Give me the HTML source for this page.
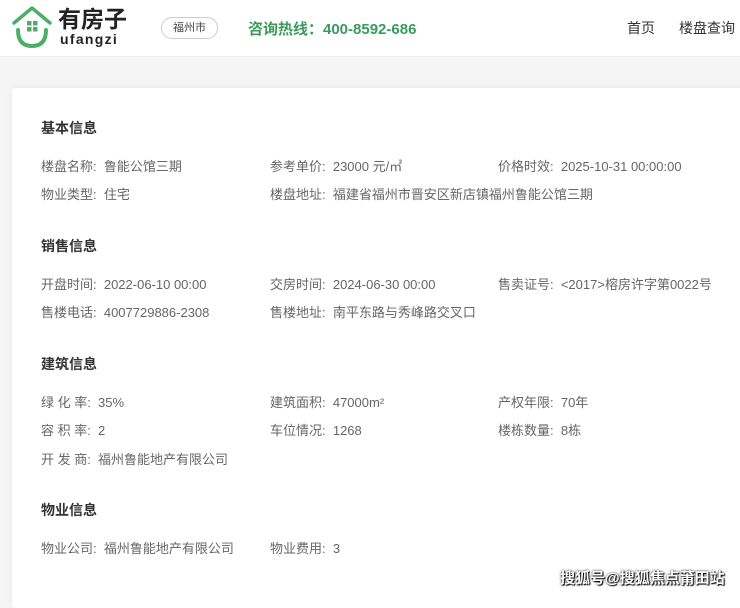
<!DOCTYPE html>
<html><head><meta charset="utf-8"><style>
*{margin:0;padding:0;box-sizing:border-box}
body{width:740px;height:594px;overflow:hidden;background:#f5f5f5;font-family:"Liberation Sans","Noto Sans CJK SC",sans-serif;position:relative}
.hdr{position:absolute;left:0;top:0;width:740px;height:57px;background:#fff;border-bottom:1px solid #eee}
.card{position:absolute;left:12px;top:88px;width:740px;height:520px;background:#fff;box-shadow:0 0 8px rgba(0,0,0,.06);border-radius:3px}
.t{position:absolute;white-space:nowrap}
.h{font-size:14px;font-weight:bold;color:#333;left:41px}
.r{font-size:13px;color:#666}
</style></head><body>
<div class="hdr">
<svg style="position:absolute;left:0;top:0" width="56" height="56" viewBox="0 0 56 56">
<path d="M14 23 L32 8 L50 23" fill="none" stroke="#4caf68" stroke-width="3.5" stroke-linecap="round" stroke-linejoin="round"/>
<path d="M18 30 Q18 46 32 46 Q46 46 46 30" fill="none" stroke="#4caf68" stroke-width="4" stroke-linecap="round"/>
<rect x="27" y="21" width="4.5" height="4.5" fill="#4caf68"/><rect x="33" y="21" width="4.5" height="4.5" fill="#4caf68"/>
<rect x="27" y="27" width="4.5" height="4.5" fill="#4caf68"/><rect x="33" y="27" width="4.5" height="4.5" fill="#4caf68"/>
</svg>
<div class="t" style="left:58px;top:4px;font-size:23px;line-height:30px;font-weight:bold;color:#222">有房子</div>
<div class="t" style="left:60px;top:31px;font-size:14px;line-height:16px;font-weight:bold;color:#222;letter-spacing:1.3px">ufangzi</div>
<div class="t" style="left:161px;top:17px;width:57px;height:22px;border:1px solid #ccc;border-radius:11px;font-size:11px;color:#444;text-align:center;line-height:20px">福州市</div>
<div class="t" style="left:248px;top:18px;font-size:15px;font-weight:bold;color:#3a9a5c">咨询热线：400-8592-686</div>
<div class="t" style="left:627px;top:18px;font-size:14px;color:#333">首页</div>
<div class="t" style="left:679px;top:18px;font-size:14px;color:#333">楼盘查询</div>
</div>
<div class="card"></div>

<div class="t h" style="top:118px">基本信息</div>
<div class="t r" style="left:41px;top:156px">楼盘名称:&nbsp; 鲁能公馆三期</div>
<div class="t r" style="left:270px;top:156px">参考单价:&nbsp; 23000 元/㎡</div>
<div class="t r" style="left:498px;top:156px">价格时效:&nbsp; 2025-10-31 00:00:00</div>
<div class="t r" style="left:41px;top:184px">物业类型:&nbsp; 住宅</div>
<div class="t r" style="left:270px;top:184px">楼盘地址:&nbsp; 福建省福州市晋安区新店镇福州鲁能公馆三期</div>

<div class="t h" style="top:236px">销售信息</div>
<div class="t r" style="left:41px;top:274px">开盘时间:&nbsp; 2022-06-10 00:00</div>
<div class="t r" style="left:270px;top:274px">交房时间:&nbsp; 2024-06-30 00:00</div>
<div class="t r" style="left:498px;top:274px">售卖证号:&nbsp; &lt;2017&gt;榕房许字第0022号</div>
<div class="t r" style="left:41px;top:302px">售楼电话:&nbsp; 4007729886-2308</div>
<div class="t r" style="left:270px;top:302px">售楼地址:&nbsp; 南平东路与秀峰路交叉口</div>

<div class="t h" style="top:354px">建筑信息</div>
<div class="t r" style="left:41px;top:392px">绿 化 率:&nbsp; 35%</div>
<div class="t r" style="left:270px;top:392px">建筑面积:&nbsp; 47000m²</div>
<div class="t r" style="left:498px;top:392px">产权年限:&nbsp; 70年</div>
<div class="t r" style="left:41px;top:420px">容 积 率:&nbsp; 2</div>
<div class="t r" style="left:270px;top:420px">车位情况:&nbsp; 1268</div>
<div class="t r" style="left:498px;top:420px">楼栋数量:&nbsp; 8栋</div>
<div class="t r" style="left:41px;top:449px">开 发 商:&nbsp; 福州鲁能地产有限公司</div>

<div class="t h" style="top:500px">物业信息</div>
<div class="t r" style="left:41px;top:538px">物业公司:&nbsp; 福州鲁能地产有限公司</div>
<div class="t r" style="left:270px;top:538px">物业费用:&nbsp; 3</div>

<div class="t" style="left:560px;top:567px;font-size:15px;font-weight:bold;color:#fff;text-shadow:0 0 2px #000,1px 1px 1px #000">搜狐号@搜狐焦点莆田站</div>
</body></html>
